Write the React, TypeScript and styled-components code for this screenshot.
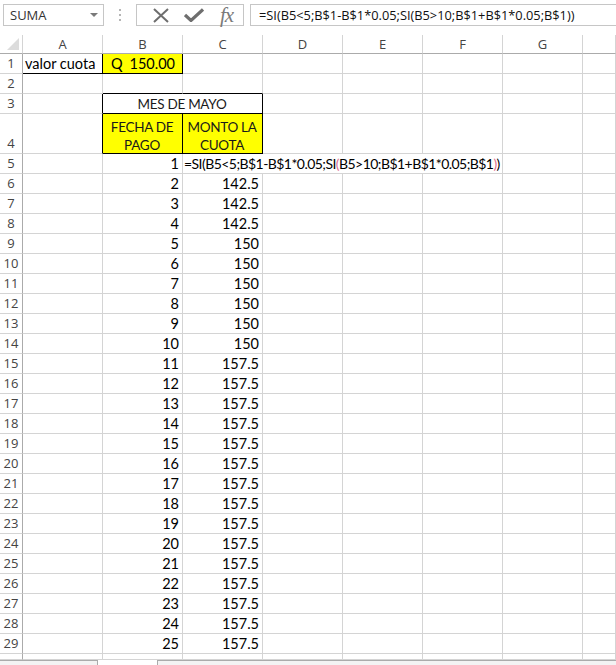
import styled, { createGlobalStyle } from "styled-components";

const GlobalStyle = createGlobalStyle`
  body {
    margin: 0;
    background: #fff;
    font-family: "Open Sans", "Liberation Sans", sans-serif;
  }
`;

const COLS = "23px repeat(7, 80px) 1fr";
const GRID = "#d4d4d4";
const HEAD = "#ababab";

const Wrapper = styled.div`
  width: 616px;
  height: 665px;
  overflow: hidden;
  display: flex;
  flex-direction: column;
`;

const FormulaBar = styled.div`
  display: flex;
  align-items: stretch;
  height: 22px;
  margin: 4px 0 9px 3px;
`;

const NameBox = styled.div`
  box-sizing: border-box;
  width: 101px;
  border: 1px solid #c6c6c6;
  display: flex;
  align-items: center;
  justify-content: space-between;
  padding: 0 5px 0 6px;
  font-size: 13px;
  color: #333;
`;

const DropArrow = styled.span`
  width: 0;
  height: 0;
  border-left: 4px solid transparent;
  border-right: 4px solid transparent;
  border-top: 4px solid #7a7a7a;
`;

const Grip = styled.div`
  width: 32px;
  display: flex;
  flex-direction: column;
  align-items: center;
  justify-content: center;
  gap: 3px;

  span {
    width: 2px;
    height: 2px;
    background: #b5b5b5;
  }
`;

const IconBox = styled.div`
  box-sizing: border-box;
  width: 108px;
  border: 1px solid #c6c6c6;
  display: flex;
  align-items: center;
  padding-left: 7px;
`;

const IconSlot = styled.div`
  width: 36px;
  display: flex;
  align-items: center;
  justify-content: center;
`;

const Fx = styled.span`
  font-family: "Liberation Serif", serif;
  font-style: italic;
  font-size: 21px;
  color: #7a7a7a;
  line-height: 1;
  letter-spacing: -1px;
`;

const FormulaInput = styled.div`
  flex: 1;
  margin-left: 6px;
  border: 1px solid #c6c6c6;
  border-right: none;
  display: flex;
  align-items: center;
  padding-left: 8px;
  font-size: 12.8px;
  color: #111;
  white-space: nowrap;
`;

const Row = styled.div<{ $h: number }>`
  display: grid;
  grid-template-columns: ${COLS};
  height: ${(p) => p.$h}px;
  flex-shrink: 0;
`;

const Corner = styled.div`
  box-sizing: border-box;
  border-right: 1px solid ${GRID};
  border-bottom: 1px solid ${HEAD};
  position: relative;

  &::after {
    content: "";
    position: absolute;
    right: 3px;
    bottom: 3px;
    border-left: 12px solid transparent;
    border-bottom: 12px solid #dcdcdc;
  }
`;

const ColHead = styled.div`
  box-sizing: border-box;
  border-right: 1px solid ${GRID};
  border-bottom: 1px solid ${HEAD};
  display: flex;
  align-items: center;
  justify-content: center;
  font-size: 13px;
  color: #444;
`;

const RowHead = styled.div`
  box-sizing: border-box;
  border-right: 1px solid ${HEAD};
  border-bottom: 1px solid ${GRID};
  display: flex;
  align-items: flex-end;
  justify-content: center;
  padding-bottom: 1px;
  font-size: 13px;
  color: #444;
`;

type CellProps = {
  $fill?: string;
  $r?: string;
  $b?: string;
  $align?: "left" | "right" | "center" | "between";
  $span?: number;
};

const justify = {
  left: "flex-start",
  right: "flex-end",
  center: "center",
  between: "space-between",
};

const Cell = styled.div<CellProps>`
  box-sizing: border-box;
  grid-column: span ${(p) => p.$span ?? 1};
  background: ${(p) => p.$fill ?? "#fff"};
  border-right: 1px solid ${(p) => p.$r ?? GRID};
  border-bottom: 1px solid ${(p) => p.$b ?? GRID};
  display: flex;
  align-items: flex-end;
  justify-content: ${(p) => justify[p.$align ?? "left"]};
  padding: 0 3px 1px 2px;
  font-family: "Lato", "Liberation Sans", sans-serif;
  font-size: 14.5px;
  color: #000;
  white-space: nowrap;
  overflow: hidden;
`;

const TitleCell = styled(Cell)`
  font-size: 13.5px;
  letter-spacing: -0.3px;
  color: #1a1a1a;
`;

const FormulaCell = styled(Cell)`
  font-size: 14px;
  letter-spacing: -0.55px;
  padding-left: 1px;
`;

const Wrap = styled.div`
  width: 100%;
  text-align: center;
  line-height: 18px;
  margin-bottom: -2px;
  font-size: 13.5px;
  letter-spacing: -0.3px;
  color: #1a1a1a;
`;

const Paren = styled.span`
  color: #e2708f;
`;

const TabBar = styled.div`
  display: flex;
  flex: 1;
  gap: 59px;
`;

const Tab = styled.div<{ $grow?: boolean }>`
  box-sizing: border-box;
  width: ${(p) => (p.$grow ? "auto" : "98px")};
  flex: ${(p) => (p.$grow ? 1 : "none")};
  background: #f3f3f3;
  border-top: 1px solid ${HEAD};
  border-right: ${(p) => (p.$grow ? "none" : `1px solid ${HEAD}`)};
  border-left: ${(p) => (p.$grow ? `1px solid ${HEAD}` : "none")};
`;

const FORMULA = "=SI(B5<5;B$1-B$1*0.05;SI(B5>10;B$1+B$1*0.05;B$1))";

const montos = (n: number) => (n <= 4 ? "142.5" : n <= 10 ? "150" : "157.5");

const Blank = ({ n }: { n: number }) => (
  <>
    {Array.from({ length: n }).map((_, i) => (
      <Cell key={i} />
    ))}
  </>
);

const App = () => {
  const dataRows = Array.from({ length: 24 }, (_, i) => i + 2);

  return (
    <Wrapper>
      <GlobalStyle />
      <FormulaBar>
        <NameBox>
          SUMA
          <DropArrow />
        </NameBox>
        <Grip>
          <span />
          <span />
          <span />
        </Grip>
        <IconBox>
          <IconSlot>
            <svg width="18" height="15" viewBox="0 0 18 15">
              <path d="M2 1 L16 14 M16 1 L2 14" stroke="#6e6e6e" strokeWidth="2" fill="none" />
            </svg>
          </IconSlot>
          <IconSlot>
            <svg width="20" height="14" viewBox="0 0 20 14">
              <path d="M1 7 L7 12.5 L19 1.5" stroke="#6e6e6e" strokeWidth="3.2" fill="none" />
            </svg>
          </IconSlot>
          <IconSlot>
            <Fx>fx</Fx>
          </IconSlot>
        </IconBox>
        <FormulaInput>{FORMULA}</FormulaInput>
      </FormulaBar>

      <Row $h={19}>
        <Corner />
        {["A", "B", "C", "D", "E", "F", "G", ""].map((c, i) => (
          <ColHead key={i}>{c}</ColHead>
        ))}
      </Row>

      <Row $h={20}>
        <RowHead>1</RowHead>
        <Cell $r="#000" $b="#000">
          valor cuota
        </Cell>
        <Cell $fill="#ffff00" $r="#000" $b="#000" $align="between">
          <span style={{ paddingLeft: 6 }}>Q</span>
          <span style={{ paddingRight: 4 }}>150.00</span>
        </Cell>
        <Blank n={6} />
      </Row>

      <Row $h={20}>
        <RowHead>2</RowHead>
        <Cell />
        <Cell $b="#000" />
        <Cell $b="#000" />
        <Blank n={5} />
      </Row>

      <Row $h={20}>
        <RowHead>3</RowHead>
        <Cell $r="#000" />
        <TitleCell $span={2} $r="#000" $b="#000" $align="center">
          MES DE MAYO
        </TitleCell>
        <Blank n={5} />
      </Row>

      <Row $h={40}>
        <RowHead>4</RowHead>
        <Cell $r="#000" />
        <Cell $fill="#ffff00" $r="#000" $b="#000">
          <Wrap>
            FECHA DE
            <br />
            PAGO
          </Wrap>
        </Cell>
        <Cell $fill="#ffff00" $r="#000" $b="#000">
          <Wrap>
            MONTO LA
            <br />
            CUOTA
          </Wrap>
        </Cell>
        <Blank n={5} />
      </Row>

      <Row $h={20}>
        <RowHead>5</RowHead>
        <Cell />
        <Cell $align="right">1</Cell>
        <FormulaCell $span={4}>
          =SI(B5&lt;5;B$1-B$1*0.05;SI<Paren>(</Paren>B5&gt;10;B$1+B$1*0.05;B$1<Paren>)</Paren>)
        </FormulaCell>
        <Blank n={2} />
      </Row>

      {dataRows.map((n) => (
        <Row $h={20} key={n}>
          <RowHead>{n + 4}</RowHead>
          <Cell />
          <Cell $align="right">{n}</Cell>
          <Cell $align="right">{montos(n)}</Cell>
          <Blank n={5} />
        </Row>
      ))}

      <Row $h={6}>
        <RowHead />
        <Blank n={8} />
      </Row>

      <TabBar>
        <Tab />
        <Tab $grow />
      </TabBar>
    </Wrapper>
  );
};

export default App;
